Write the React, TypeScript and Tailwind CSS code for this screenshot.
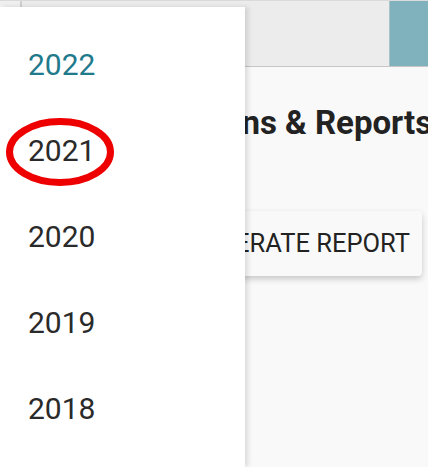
import React from "react";

const years = ["2022", "2021", "2020", "2019", "2018"];

function YearMenu() {
  return (
    <div className="absolute left-0 top-[7px] bottom-0 w-[245px] bg-white pt-[14px] shadow-[3px_0_5px_rgba(0,0,0,0.12)]">
      {years.map((y, i) => (
        <div
          key={y}
          className={
            "flex h-[86px] items-center pl-[28px] text-[30px] " +
            (i === 0 ? "text-[#1f7a8c]" : "text-[#2a2a2a]")
          }
        >
          {y}
        </div>
      ))}
      {/* red annotation circle round 2021 */}
      <svg
        className="absolute left-[4px] top-[109px]"
        width="112"
        height="72"
        viewBox="0 0 112 72"
      >
        <ellipse cx="56" cy="36" rx="50.5" ry="30.5" fill="none" stroke="#ee0000" strokeWidth="7" />
      </svg>
    </div>
  );
}

export default function App() {
  return (
    <div className="relative h-[467px] w-[428px] overflow-hidden bg-[#f9f9f9] font-['Roboto',sans-serif]">
      <div className="flex h-[67px] border-t border-b border-t-[#dadada] border-b-[#c6c6c6] bg-[#ececec]">
        <div className="w-[22px] border-r-2 border-[#cfcfcf] bg-[#f0f0f0]" />
        <div className="flex-1" />
        <div className="w-[39px] border-l border-[#a9c3c8] bg-[#80b2bd]" />
      </div>
      <div className="flex flex-col pt-[38px]">
        <h1 className="ml-[84px] whitespace-nowrap text-[33px] font-bold leading-[36px] text-[#222]">
          Transactions &amp; Reports
        </h1>
        <div className="mt-[70px] flex justify-end pr-[6px]">
          <button className="h-[65px] whitespace-nowrap rounded-[4px] bg-[#f9f9f9] px-[12px] text-[25.5px] uppercase text-[#222] shadow-[0_3px_6px_rgba(0,0,0,0.2)]">
            Generate Report
          </button>
        </div>
      </div>
      <YearMenu />
    </div>
  );
}
